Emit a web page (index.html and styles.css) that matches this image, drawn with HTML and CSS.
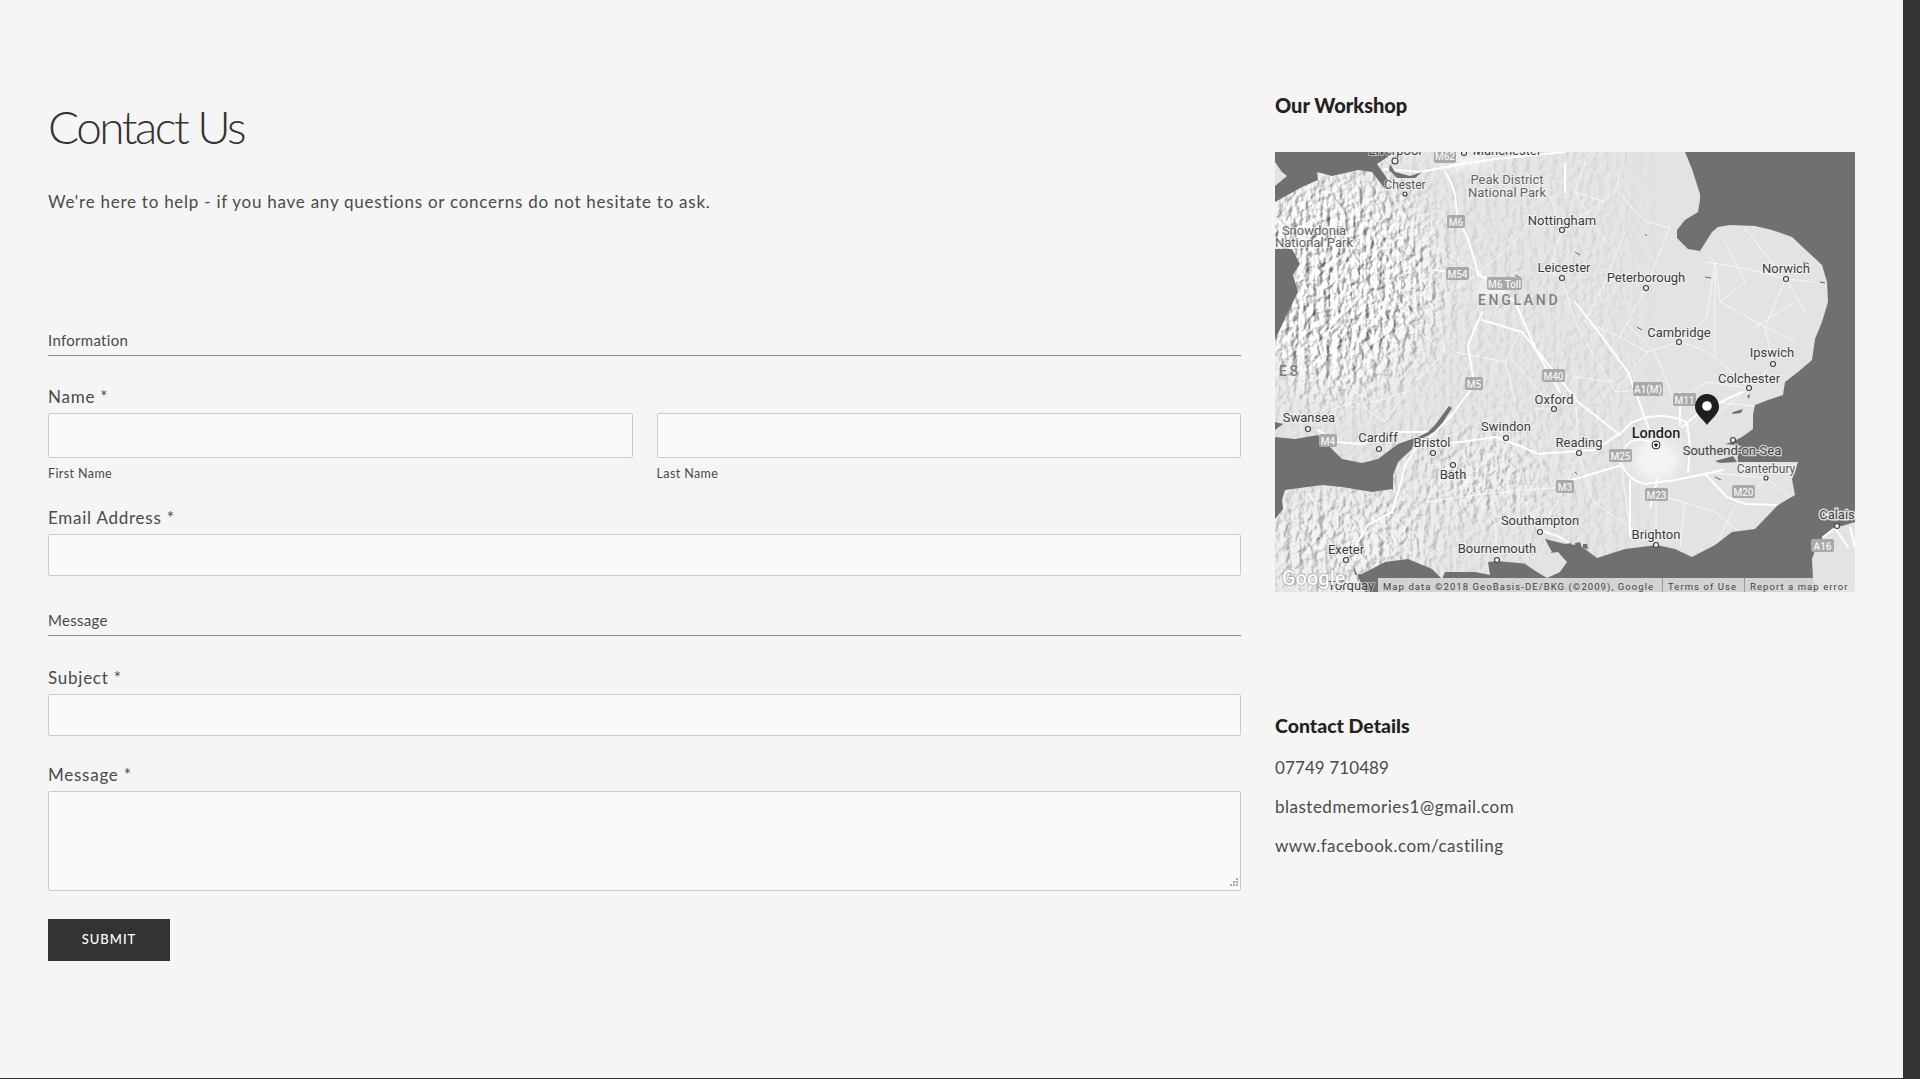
FILE: index.html
```html
<!DOCTYPE html>
<html lang="en">
<head>
<meta charset="utf-8">
<title>Contact Us</title>
<link rel="stylesheet" href="styles.css">
</head>
<body>
<div class="window">
  <main class="page">
    <section class="form-col">
      <h1 class="title">Contact Us</h1>
      <p class="intro">We're here to help - if you have any questions or concerns do not hesitate to ask.</p>
      <form class="form">
        <h3 class="section section-info">Information</h3>
        <div class="field field-name">
          <label class="label">Name *</label>
          <div class="name-row">
            <div class="name-cell"><input class="input input-tall" type="text"><span class="sublabel">First Name</span></div>
            <div class="name-cell"><input class="input input-tall" type="text"><span class="sublabel">Last Name</span></div>
          </div>
        </div>
        <div class="field field-email">
          <label class="label">Email Address *</label>
          <input class="input" type="email">
        </div>
        <h3 class="section section-message">Message</h3>
        <div class="field field-subject">
          <label class="label">Subject *</label>
          <input class="input" type="text">
        </div>
        <div class="field field-message">
          <label class="label">Message *</label>
          <textarea class="textarea"></textarea>
        </div>
        <button class="submit" type="button">Submit</button>
      </form>
    </section>
    <aside class="side-col">
      <h2 class="side-title">Our Workshop</h2>
      <div class="map">
        <svg class="map-svg" viewBox="0 0 580 440" width="580" height="440" xmlns="http://www.w3.org/2000/svg">
          <defs>
            <filter id="hill" x="0" y="0" width="100%" height="100%" color-interpolation-filters="sRGB">
              <feTurbulence type="fractalNoise" baseFrequency="0.15 0.13" numOctaves="4" seed="23"/>
              <feDiffuseLighting surfaceScale="2.300" diffuseConstant="1.130" lighting-color="#ffffff">
                <feDistantLight azimuth="200" elevation="55"/>
              </feDiffuseLighting>
            </filter>
            <filter id="mask-blur" x="-40%" y="-40%" width="180%" height="180%"><feGaussianBlur stdDeviation="22"/></filter>
            <mask id="terrain-mask" maskUnits="userSpaceOnUse" x="0" y="0" width="580" height="440">
              <g filter="url(#mask-blur)">
                <rect class="mask-base" x="-40" y="-40" width="400" height="520"/>
                <ellipse class="mask-strong" cx="60" cy="130" rx="85" ry="95"/>
                <ellipse class="mask-mid" cx="70" cy="390" rx="85" ry="40"/>
                <ellipse class="mask-mid" cx="200" cy="325" rx="55" ry="25"/>
              </g>
            </mask>
            <filter id="soft"><feGaussianBlur stdDeviation="6"/></filter>
          </defs>

          <rect class="land" width="580" height="440"/>
          <rect width="580" height="440" filter="url(#hill)" mask="url(#terrain-mask)"/>

          <ellipse class="city-glow" cx="381" cy="308" rx="24" ry="20" filter="url(#soft)"/>
          <ellipse class="city-glow" cx="215" cy="140" rx="14" ry="10" filter="url(#soft)"/>
          <ellipse class="city-glow" cx="190" cy="10" rx="28" ry="8" filter="url(#soft)"/>

          <path class="roads-minor" d="M287 78Q278 100 275 120L287 126Q295 150 300 170M287 78Q320 55 340 40L345 20M345 40Q358 60 372 70L395 76Q382 105 371 136M371 136Q355 165 345 185L372 200L404 190M404 190Q425 175 432 165L440 110L430 100M430 110Q470 115 511 127Q522 145 530 160M511 127Q500 150 490 175L498 212L474 236M511 127Q495 110 470 76M440 110Q443 130 445 150L490 175L520 190M372 200Q355 220 340 240L373 237M404 190Q425 195 440 205L474 236L432 270M120 50Q135 75 150 90L205 120L160 150L120 130L90 180M205 120L240 90L260 60M150 90L170 60M160 150Q168 175 170 200L130 240M205 120L230 170M100 130L60 170L30 210M60 100L90 130M130 240L110 270L80 250L50 260M259 257L279 257L300 225L340 230M279 257L240 210M231 286L225 330L250 350L265 380M231 286L190 330L178 313L150 350L120 390L71 408M178 313Q200 345 220 370L222 408M150 350L225 340L290 335M40 350L80 370L71 408M30 370L60 400M304 301L290 335L265 380M304 301L318 350L381 393M345 303L355 380M381 342L381 393M381 342L440 360L470 385M430 320L491 326L515 345M491 326L470 350M468 339L440 395M410 350L405 395M400 250L432 230L474 236M400 250L380 200L350 170M330 130L310 170L345 185M330 50L300 40M410 280L440 250L490 255M300 170L340 240M250 20L275 45L287 78M310 10L300 40L330 90M450 90L470 130L445 150M540 130L511 127M480 175L520 150M350 80L330 130M250 170L230 210L240 250M180 200L230 210M130 170L170 200M60 230L100 250L130 240M20 320L40 350M100 345L130 370M300 240L304 301M440 205L440 120"/>
          <path class="roads-major" d="M110 17L146 20L187 12L220 7L290 0M170 20Q178 32 180 43L182 63L193 87L200 110L203 123L215 128M160 118L187 122M207 160L193 193L197 220L200 232L177 263L157 283L143 293L130 313L127 327L117 360L93 373L83 390L80 407M43 278L63 290L87 292L123 280L157 280M157 292L187 290L220 285L243 293L263 302L290 300L320 298L347 280L357 270M207 168L247 180L277 217L303 250L345 283M300 150L322 178L353 220L375 280M215 130L240 150L262 200L285 240M375 290Q350 280 346 310Q352 328 370 332L400 328L430 322L448 318M430 322L452 345L470 352L503 353M358 270Q385 258 412 270L415 295L413 320M405 240L405 273M407 275L425 260L467 240M290 330L347 313M375 355L383 326M265 378L285 385L295 392M355 328L355 385M290 12L290 40"/>

          <path class="water" d="M0 0L118 0L117 2L102 12L113 28L110 37L97 20L83 18L57 24L42 20L43 28L27 35L0 50Z"/>
          <path class="land" d="M0 10L7 20L12 24L0 34Z"/>
          <path class="water" d="M115 12L120 20L135 24L147 20L140 26L122 26L114 18Z"/>
          <path class="water" d="M0 97L17 97L25 112L18 123L23 140L13 160L0 188Z"/>
          <path class="water" d="M0 285L20 287L43 283L50 293L55 295L67 307L87 311L103 307L123 292L140 286L137 297L123 310L118 323L118 337L97 340L67 335L47 333L10 338L7 348L8 357L0 367Z"/>
          <path class="water" d="M0 270L8 272L0 278Z"/>
          <path class="water" d="M153 280L160 273L174 254L177 256L168 270L159 280L148 286L141 286Z"/>
          <path class="water" d="M410 0L417 17L425 42L425 48L423 60L410 68L402 78L402 86L413 97L425 99L437 80L443 75L455 73L480 74L497 78L517 85L533 100L547 113L552 130L553 150L547 170L540 187L537 208L523 220L510 230L508 243L493 248L480 253L478 263L478 277L467 285L457 290L450 292L467 294L462 297L463 310L493 310L523 310L520 320L517 327L520 343L503 353L480 377L457 380L440 393L417 405L400 397L382 393L350 397L322 406L310 397L303 393L290 392L270 387L277 400L253 412L222 409L213 410L215 423L200 420L170 420L167 427L157 417L133 407L110 410L87 422L80 423L78 413L90 440L580 440L580 0Z"/>
          <path class="land" d="M250 412L268 402L283 400L292 410L285 420L272 426L262 420Z"/>
          <path class="land" d="M580 370L557 377L543 390L537 407L538 427L543 440L580 440Z"/>
          <path class="water" d="M458 260L468 257L466 261L457 262ZM440 309L458 304L462 310L445 311ZM472 244L475 242L474 247Z"/>
          <path class="water" d="M290 392L296 391L297 396L290 396ZM300 391L305 390L307 395L301 396ZM308 392L312 392L313 397L308 396Z"/>
          <path class="roads-major" d="M548 385L560 376L573 395M575 375L580 395"/>
          <path class="scar" d="M370 82L372 84M300 100L305 103M240 123L246 126M362 175L367 178M430 125L436 126M528 110L534 112M545 130L550 131M440 325L446 328M300 320L302 322"/>

          <g class="shield"><rect x="159" y="-3" width="22" height="14"/><text x="170" y="8">M62</text></g>
          <g class="shield"><rect x="172" y="63" width="18" height="13"/><text x="181" y="74">M6</text></g>
          <g class="shield"><rect x="171" y="115" width="23" height="13"/><text x="182.500" y="126">M54</text></g>
          <g class="shield"><rect x="212" y="125" width="35" height="13"/><text x="229.500" y="136">M6 Toll</text></g>
          <g class="shield"><rect x="267" y="217" width="23" height="13"/><text x="278.500" y="228">M40</text></g>
          <g class="shield"><rect x="190" y="225" width="18" height="13"/><text x="199" y="236">M5</text></g>
          <g class="shield"><rect x="358" y="230" width="30" height="14"/><text x="373" y="241">A1(M)</text></g>
          <g class="shield"><rect x="398" y="241" width="23" height="13"/><text x="409.500" y="252">M11</text></g>
          <g class="shield"><rect x="334" y="297" width="23" height="13"/><text x="345.500" y="308">M25</text></g>
          <g class="shield"><rect x="44" y="282" width="18" height="13"/><text x="53" y="293">M4</text></g>
          <g class="shield"><rect x="281" y="328" width="18" height="13"/><text x="290" y="339">M3</text></g>
          <g class="shield"><rect x="370" y="336" width="23" height="13"/><text x="381.500" y="347">M23</text></g>
          <g class="shield"><rect x="457" y="333" width="23" height="13"/><text x="468.500" y="344">M20</text></g>
          <g class="shield"><rect x="536" y="387" width="23" height="13"/><text x="547.500" y="398">A16</text></g>

          <text class="region" x="203" y="153">ENGLAND</text>
          <text class="region" x="4" y="224">ES</text>

          <text class="city park" x="232" y="32">Peak District</text>
          <text class="city park" x="232" y="45">National Park</text>
          <text class="city park" x="39" y="83">Snowdonia</text>
          <text class="city park" x="39" y="95">National Park</text>
          <text class="city" x="120" y="3">Liverpool</text>
          <text class="city" x="232" y="3">Manchester</text>
          <text class="city small" x="130" y="37">Chester</text>
          <text class="city" x="287" y="73">Nottingham</text>
          <text class="city" x="289" y="120">Leicester</text>
          <text class="city" x="371" y="130">Peterborough</text>
          <text class="city" x="511" y="121">Norwich</text>
          <text class="city" x="404" y="185">Cambridge</text>
          <text class="city" x="497" y="205">Ipswich</text>
          <text class="city" x="474" y="231">Colchester</text>
          <text class="city london" x="381" y="286">London</text>
          <text class="city south" x="457" y="303">Southend-on-Sea</text>
          <text class="city" x="304" y="295">Reading</text>
          <text class="city" x="279" y="252">Oxford</text>
          <text class="city" x="231" y="279">Swindon</text>
          <text class="city" x="157" y="295">Bristol</text>
          <text class="city" x="178" y="327">Bath</text>
          <text class="city" x="103" y="290">Cardiff</text>
          <text class="city" x="34" y="270">Swansea</text>
          <text class="city" x="71" y="402">Exeter</text>
          <text class="city" x="265" y="373">Southampton</text>
          <text class="city" x="222" y="401">Bournemouth</text>
          <text class="city" x="381" y="387">Brighton</text>
          <text class="city small" x="491" y="321">Canterbury</text>
          <text class="city calais" x="562" y="367">Calais</text>
          <text class="city" x="76" y="438">Torquay</text>

          <g class="dots">
            <circle cx="120" cy="9" r="3"/><circle cx="189" cy="1" r="2.500"/><circle cx="130" cy="42" r="2"/>
            <circle cx="287" cy="78" r="2.500"/><circle cx="287" cy="126" r="2.500"/><circle cx="371" cy="136" r="2.500"/>
            <circle cx="511" cy="127" r="2.500"/><circle cx="404" cy="190" r="2.500"/><circle cx="498" cy="212" r="2.500"/>
            <circle cx="474" cy="236" r="2.500"/><circle cx="458" cy="288" r="2.500"/><circle cx="304" cy="301" r="2.500"/>
            <circle cx="279" cy="257" r="2.500"/><circle cx="231" cy="286" r="2.500"/><circle cx="158" cy="301" r="2.500"/>
            <circle cx="178" cy="313" r="2.500"/><circle cx="104" cy="297" r="2.500"/><circle cx="33" cy="277" r="2.500"/>
            <circle cx="71" cy="408" r="2.500"/><circle cx="265" cy="380" r="2.500"/><circle cx="222" cy="408" r="2.500"/>
            <circle cx="381" cy="393" r="2.500"/><circle cx="491" cy="326" r="2"/><circle cx="562" cy="374" r="2.500"/>
          </g>
          <circle class="bull-outer" cx="381" cy="293" r="4"/>
          <circle class="bull-inner" cx="381" cy="293" r="1.700"/>

          <path class="pin" d="M432 242C424 242 420 249 420 255C420 262 428 267 432 273C436 267 444 262 444 255C444 249 440 242 432 242Z"/>
          <circle class="pin-hole" cx="432" cy="254" r="4.800"/>

          <text class="google" x="7" y="433">Google</text>
          <rect class="attr-bar" x="103" y="426" width="477" height="14"/>
          <text class="attr" x="108" y="438">Map data ©2018 GeoBasis-DE/BKG (©2009), Google</text>
          <text class="attr" x="393" y="438">Terms of Use</text>
          <text class="attr" x="475" y="438">Report a map error</text>
          <path class="attr-sep" d="M387.500 426V440M469.500 426V440"/>
        </svg>
      </div>
      <h2 class="side-title contact-title">Contact Details</h2>
      <ul class="contact-list">
        <li class="phone">07749 710489</li>
        <li>blastedmemories1@gmail.com</li>
        <li>www.facebook.com/castiling</li>
      </ul>
    </aside>
  </main>
  <div class="scrollbar"></div>
</div>
</body>
</html>
```

FILE: styles.css
```css
* { box-sizing: border-box; }
html, body { margin: 0; padding: 0; height: 100%; overflow: hidden; }
body { background: #f5f5f5; color: #4a4a4a; font-family: "Lato", "Liberation Sans", sans-serif; }

.window { display: flex; height: 1079px; border-bottom: 1px solid #333; }
.scrollbar { width: 17px; flex: none; background: #333; }
.page { flex: 1; display: flex; gap: 34px; padding: 93px 48px 0; min-width: 0; }

.form-col { width: 1193px; flex: none; }
.side-col { width: 580px; flex: none; }

.title { margin: 6px 0 0; font-size: 46px; line-height: 56px; font-weight: 300; letter-spacing: -2.500px; color: #333; }
.intro { margin: 35px 0 0; font-size: 17px; line-height: 24px; letter-spacing: .75px; }

.form { margin: 0; display: block; }
.section { margin: 0; padding-bottom: 5px; font-size: 15px; line-height: 20px; font-weight: 400; letter-spacing: .3px; border-bottom: 1px solid #8c8c8c; }
.section-info { margin-top: 116px; }
.section-message { margin-top: 34px; }

.field-name { margin-top: 30px; }
.field-email { margin-top: 25px; }
.field-subject { margin-top: 31px; }
.field-message { margin-top: 28px; }

.label { display: block; margin-bottom: 6px; font-size: 17px; line-height: 21px; letter-spacing: .75px; }
.name-row { display: flex; gap: 24px; }
.name-cell { flex: 1; min-width: 0; }
.sublabel { display: block; margin-top: 8px; font-size: 12.500px; line-height: 16px; letter-spacing: .4px; }

.input, .textarea { display: block; width: 100%; margin: 0; padding: 0; background: #fafafa; border: 1px solid #cbcbcb; border-radius: 2px; outline: none; }
.input { height: 42px; }
.input-tall { height: 45px; }
.textarea { height: 100px; resize: both; }
.textarea::-webkit-resizer {
  background: url("data:image/svg+xml,%3Csvg xmlns='http://www.w3.org/2000/svg' width='15' height='15'%3E%3Cpath fill='%23a8a8a8' d='M11 3h2v2h-2zM8 6h2v2H8zM11 6h2v2h-2zM5 9h2v2H5zM8 9h2v2H8zM11 9h2v2h-2z'/%3E%3C/svg%3E") no-repeat right bottom;
}

.submit { display: block; margin-top: 28px; width: 122px; height: 42px; padding: 0 0 2px; border: 0; background: #333; color: #fff; font-family: "Lato", sans-serif; font-size: 13px; font-weight: 500; letter-spacing: 1px; text-transform: uppercase; }

.side-title { margin: 0; font-size: 20px; line-height: 24px; font-weight: 900; letter-spacing: 0; color: #222; }
.map { margin-top: 35px; height: 440px; }
.map-svg { display: block; }
.contact-title { margin-top: 122px; font-size: 19.500px; }
.contact-list { list-style: none; margin: 20px 0 0; padding: 0; font-size: 17px; line-height: 20px; letter-spacing: .5px; }
.contact-list li { margin-bottom: 19px; }
.contact-list .phone { letter-spacing: .1px; }

/* map */
.land { fill: #e3e3e3; }
.water { fill: #707070; }
.mask-base { fill: #222; }
.mask-strong { fill: #fff; }
.mask-mid { fill: #999; }
.city-glow { fill: #fff; opacity: .6; }
.roads-minor { fill: none; stroke: #fff; stroke-width: .9; opacity: .75; stroke-linejoin: round; }
.roads-major { fill: none; stroke: #fff; stroke-width: 2; stroke-linejoin: round; stroke-linecap: round; }
.scar { fill: none; stroke: #666; stroke-width: 1; }
.shield rect { fill: #a9a9a9; rx: 2px; }
.shield text { fill: #f4f4f4; font: 500 10px "Roboto", sans-serif; text-anchor: middle; }
.region { fill: #7f7f7f; font: 500 14px "Roboto", sans-serif; letter-spacing: 2.700px; }
.city { fill: #3c3c3c; font: 400 13px "Roboto", sans-serif; text-anchor: middle; paint-order: stroke; stroke: rgba(255,255,255,.55); stroke-width: 2px; }
.small { font-size: 12px; fill: #555; }
.park { fill: #636363; }
.london { font-size: 14.500px; font-weight: 500; fill: #1f1f1f; }
.south { fill: #444; stroke: rgba(225,225,225,.85); stroke-width: 2.500px; }
.calais { fill: #444; font-size: 13px; stroke: rgba(235,235,235,.9); stroke-width: 3px; }
.dots circle { fill: #eee; stroke: #3c3c3c; stroke-width: 1.100; }
.bull-outer { fill: #fff; stroke: #222; stroke-width: 1; }
.bull-inner { fill: #111; }
.pin { fill: #1f1f1f; }
.pin-hole { fill: #fff; }
.google { fill: #fff; font: 500 20px "Roboto", sans-serif; paint-order: stroke; stroke: rgba(70,70,70,.5); stroke-width: 1.200px; }
.attr-bar { fill: #e4e4e4; opacity: .85; }
.attr { fill: #444; font: 400 9.500px "Roboto", sans-serif; letter-spacing: 1.070px; }
.attr-sep { stroke: #9a9a9a; stroke-width: 1; fill: none; }
```
